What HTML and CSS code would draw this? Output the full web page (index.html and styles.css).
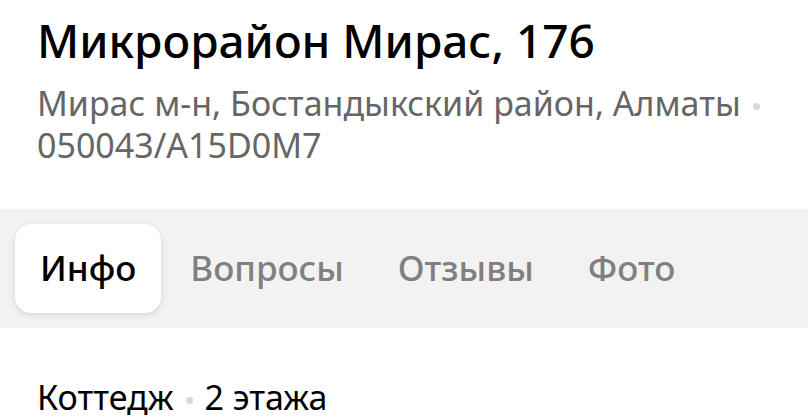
FILE: index.html
```html
<!DOCTYPE html>
<html lang="ru">
<head>
<meta charset="utf-8">
<link rel="stylesheet" href="styles.css">
</head>
<body>
<div class="header">
  <h1 class="title">Микрорайон Мирас, 176</h1>
  <p class="subtitle">Мирас м-н, Бостандыкский район, Алматы<span class="dot"></span> 050043/A15D0M7</p>
</div>
<nav class="tabs">
  <div class="tab active">Инфо</div>
  <div class="tab">Вопросы</div>
  <div class="tab">Отзывы</div>
  <div class="tab">Фото</div>
</nav>
<p class="facts">Коттедж<span class="dot"></span>2 этажа</p>
</body>
</html>
```
FILE: styles.css
```css
html, body {
  margin: 0;
  padding: 0;
  background: #fff;
}
body {
  font-family: "Noto Sans", "DejaVu Sans", sans-serif;
  color: #000;
  width: 808px;
  height: 419px;
  overflow: hidden;
}
.header {
  padding: 14px 30px 0 37px;
}
.title {
  margin: 0;
  font-size: 46px;
  line-height: 52px;
  font-weight: 500;
  color: #000;
}
.subtitle {
  margin: 16px 0 0;
  font-size: 34px;
  line-height: 42px;
  color: #666;
}
.dot {
  display: inline-block;
  width: 7px;
  height: 7px;
  border-radius: 50%;
  background: #d9d9d9;
  vertical-align: middle;
  margin: 0 6px 0 12px;
}
.tabs {
  margin-top: 43px;
  background: #f2f2f2;
  padding: 15px;
  display: flex;
  gap: 4px;
}
.tab {
  padding: 0 25px;
  height: 89px;
  line-height: 87px;
  font-size: 35px;
  font-weight: 500;
  color: #808080;
  border-radius: 16px;
}
.tab.active {
  background: #fff;
  color: #000;
  box-shadow: 0 2px 6px rgba(0,0,0,0.12);
}
.facts {
  margin: 49px 0 0;
  padding-left: 37px;
  font-size: 34px;
  line-height: 40px;
}
.facts .dot {
  margin: 0 12px 0 12px;
}
```
